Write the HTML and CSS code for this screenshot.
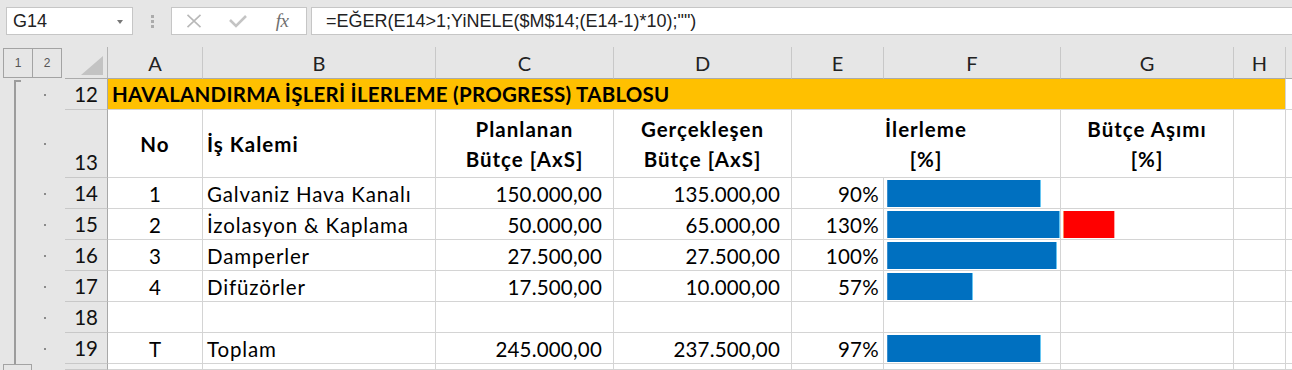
FILE: index.html
```html
<!DOCTYPE html>
<html lang="tr">
<head>
<meta charset="utf-8">
<title>Havalandırma İlerleme Tablosu</title>
<link rel="stylesheet" href="styles.css">
</head>
<body>
<div class="app">
  <div class="fbar">
    <div class="namebox"><span class="nb-text">G14</span><span class="nb-arrow"></span></div>
    <div class="grip"><i></i><i></i><i></i></div>
    <div class="fbtns">
      <span class="slot"><svg class="ic" width="16" height="14" viewBox="0 0 16 14"><path d="M1.5 0.8 L14.5 13.2 M14.5 0.8 L1.5 13.2" stroke="#b8b8b8" stroke-width="1.6" fill="none"/></svg></span>
      <span class="slot"><svg class="ic" width="18" height="13" viewBox="0 0 18 13"><path d="M1 5 L7 11 L17 1" stroke="#c4c4c4" stroke-width="2.6" fill="none"/></svg></span>
      <span class="slot"><span class="fx">fx</span></span>
    </div>
    <div class="formula">=EĞER(E14&gt;1;YiNELE($M$14;(E14-1)*10);"")</div>
  </div>

  <div class="sheet">
    <div class="outline"><span class="tick"></span><span class="minus"></span></div>

    <!-- column header row -->
    <div class="gut gut-h"><span class="lvl">1</span><span class="lvl lvl2">2</span></div>
    <div class="corner"><svg width="22" height="19" viewBox="0 0 22 19"><polygon points="0,19 22,19 22,0" fill="#c3c3c3"/></svg></div>
    <div class="ch">A</div>
    <div class="ch">B</div>
    <div class="ch">C</div>
    <div class="ch">D</div>
    <div class="ch">E</div>
    <div class="ch">F</div>
    <div class="ch">G</div>
    <div class="ch">H</div>
    <div class="ch ch-rest"></div>

    <!-- row 12 -->
    <div class="gut"><i></i></div>
    <div class="rh">12</div>
    <div class="title">HAVALANDIRMA İŞLERİ İLERLEME (PROGRESS) TABLOSU</div>
    <div class="c rest"></div>

    <!-- row 13 -->
    <div class="gut"><i></i></div>
    <div class="rh rh-b">13</div>
    <div class="c hd ctr">No</div>
    <div class="c hd left">İş Kalemi</div>
    <div class="c hd ctr two">Planlanan<br>Bütçe [AxS]</div>
    <div class="c hd ctr two">Gerçekleşen<br>Bütçe [AxS]</div>
    <div class="c hd ctr two span2">İlerleme<br>[%]</div>
    <div class="c hd ctr two">Bütçe Aşımı<br>[%]</div>
    <div class="c"></div>
    <div class="c rest"></div>

    <!-- row 14 -->
    <div class="gut"><i></i></div>
    <div class="rh">14</div>
    <div class="c ctr">1</div>
    <div class="c left">Galvaniz Hava Kanalı</div>
    <div class="c num">150.000,00</div>
    <div class="c num">135.000,00</div>
    <div class="c pct">90%</div>
    <div class="c barcell"><span class="bar" style="width:154px"></span></div>
    <div class="c barcell"></div>
    <div class="c"></div>
    <div class="c rest"></div>

    <!-- row 15 -->
    <div class="gut"><i></i></div>
    <div class="rh">15</div>
    <div class="c ctr">2</div>
    <div class="c left">İzolasyon &amp; Kaplama</div>
    <div class="c num">50.000,00</div>
    <div class="c num">65.000,00</div>
    <div class="c pct">130%</div>
    <div class="c barcell"><span class="bar" style="width:173px"></span></div>
    <div class="c barcell over"><span class="bar red" style="width:52px"></span></div>
    <div class="c"></div>
    <div class="c rest"></div>

    <!-- row 16 -->
    <div class="gut"><i></i></div>
    <div class="rh">16</div>
    <div class="c ctr">3</div>
    <div class="c left">Damperler</div>
    <div class="c num">27.500,00</div>
    <div class="c num">27.500,00</div>
    <div class="c pct">100%</div>
    <div class="c barcell"><span class="bar" style="width:170px"></span></div>
    <div class="c barcell"></div>
    <div class="c"></div>
    <div class="c rest"></div>

    <!-- row 17 -->
    <div class="gut"><i></i></div>
    <div class="rh">17</div>
    <div class="c ctr">4</div>
    <div class="c left">Difüzörler</div>
    <div class="c num">17.500,00</div>
    <div class="c num">10.000,00</div>
    <div class="c pct">57%</div>
    <div class="c barcell"><span class="bar" style="width:86px"></span></div>
    <div class="c barcell"></div>
    <div class="c"></div>
    <div class="c rest"></div>

    <!-- row 18 -->
    <div class="gut"><i></i></div>
    <div class="rh">18</div>
    <div class="c"></div>
    <div class="c"></div>
    <div class="c"></div>
    <div class="c"></div>
    <div class="c"></div>
    <div class="c"></div>
    <div class="c"></div>
    <div class="c"></div>
    <div class="c rest"></div>

    <!-- row 19 -->
    <div class="gut"><i></i></div>
    <div class="rh">19</div>
    <div class="c ctr">T</div>
    <div class="c left">Toplam</div>
    <div class="c num">245.000,00</div>
    <div class="c num">237.500,00</div>
    <div class="c pct">97%</div>
    <div class="c barcell"><span class="bar" style="width:154px"></span></div>
    <div class="c barcell"></div>
    <div class="c"></div>
    <div class="c rest"></div>

    <!-- row 20 (partial) -->
    <div class="gut"></div>
    <div class="rh"></div>
    <div class="c"></div>
    <div class="c"></div>
    <div class="c"></div>
    <div class="c"></div>
    <div class="c"></div>
    <div class="c"></div>
    <div class="c"></div>
    <div class="c"></div>
    <div class="c rest"></div>
  </div>
</div>
</body>
</html>
```

FILE: styles.css
```css
* { box-sizing: border-box; margin: 0; padding: 0; }

html, body {
  width: 1292px;
  height: 370px;
  overflow: hidden;
  background: #e6e6e6;
}

body {
  font-family: Lato, "Open Sans", sans-serif;
  color: #000;
}

.app {
  display: flex;
  flex-direction: column;
  height: 370px;
}

/* ---------- formula bar ---------- */
.fbar {
  height: 47px;
  flex: none;
  display: flex;
  align-items: flex-start;
  padding: 7px 0 0 6px;
  background: #e6e6e6;
}

.namebox {
  width: 127px;
  height: 28px;
  background: #fff;
  border: 1px solid #c6c6c6;
  display: flex;
  align-items: center;
  justify-content: space-between;
  padding: 0 9px 0 6px;
  font-family: "Liberation Sans", Arial, sans-serif;
  font-size: 18px;
  color: #222;
}

.nb-arrow {
  width: 0;
  height: 0;
  border-left: 3.5px solid transparent;
  border-right: 3.5px solid transparent;
  border-top: 4px solid #777;
  margin-top: 1px;
}

.grip {
  width: 38px;
  height: 28px;
  display: flex;
  flex-direction: column;
  align-items: center;
  justify-content: center;
  gap: 2px;
}

.grip i {
  display: block;
  width: 3px;
  height: 3px;
  background: #ababab;
}

.fbtns {
  width: 136px;
  height: 28px;
  background: #fff;
  border: 1px solid #c6c6c6;
  display: flex;
  align-items: center;
}

.slot {
  width: 44px;
  height: 26px;
  display: flex;
  align-items: center;
  justify-content: center;
}

.ic { display: block; }

.fx {
  font-family: "Liberation Serif", "Times New Roman", serif;
  font-style: italic;
  font-size: 19px;
  color: #6f6f6f;
  letter-spacing: -0.5px;
}

.formula {
  flex: 1;
  height: 28px;
  margin-left: 4px;
  background: #fff;
  border: 1px solid #c6c6c6;
  border-right: none;
  display: flex;
  align-items: center;
  padding-left: 14px;
  font-family: "Liberation Sans", Arial, sans-serif;
  font-size: 18px;
  color: #222;
  white-space: nowrap;
}

/* ---------- sheet grid ---------- */
.sheet {
  flex: 1;
  position: relative;
  display: grid;
  grid-template-columns: 65px 43px 95px 233px 178px 178px 92px 177px 173px 52px 1fr;
  grid-template-rows: 32px 31px 68px repeat(6, 31px) 1fr;
  background: #fff;
}

.gut {
  background: #e6e6e6;
  display: flex;
  align-items: center;
  padding-left: 44px;
}

.gut i {
  display: block;
  width: 2px;
  height: 2px;
  background: #8a8a8a;
}

.gut-h {
  padding: 1px 0 0 3px;
  align-items: flex-start;
}

.lvl {
  width: 30px;
  height: 30px;
  border: 1px solid #a3a3a3;
  display: flex;
  align-items: center;
  justify-content: center;
  font-family: "Liberation Sans", Arial, sans-serif;
  font-size: 12px;
  color: #555;
}

.lvl2 {
  width: 29px;
  border-left: none;
}

.corner {
  background: #e6e6e6;
  border-right: 1px solid #b4b4b4;
  border-bottom: 1px solid #ababab;
  display: flex;
  align-items: flex-end;
  justify-content: flex-end;
  padding: 0 4px 3px 0;
}

.corner svg { display: block; }

.ch {
  background: #e6e6e6;
  border-right: 1px solid #c8c8c8;
  border-bottom: 1px solid #ababab;
  display: flex;
  align-items: center;
  justify-content: center;
  font-size: 20px;
  color: #222;
  padding-top: 1px;
}

.ch-rest { border-right: none; }

.rh {
  background: #e6e6e6;
  border-right: 1px solid #a8a8a8;
  border-bottom: 1px solid #c8c8c8;
  display: flex;
  align-items: center;
  justify-content: flex-end;
  padding-right: 9px;
  font-size: 20.5px;
  color: #111;
}

.rh-b {
  align-items: flex-end;
  padding-bottom: 3px;
}

.title {
  grid-column: 3 / 11;
  background: #ffc000;
  border-right: 1px solid #d4d4d4;
  border-bottom: 1px solid #d4d4d4;
  display: flex;
  align-items: center;
  padding-left: 4px;
  font-weight: 700;
  font-size: 20.5px;
  letter-spacing: 0.25px;
  white-space: nowrap;
}

.c {
  background: #fff;
  border-right: 1px solid #d4d4d4;
  border-bottom: 1px solid #d4d4d4;
  display: flex;
  align-items: center;
  font-size: 20.5px;
  white-space: nowrap;
  overflow: hidden;
  padding-top: 2px;
}

.rest { border-right: none; }

.ctr { justify-content: center; text-align: center; }
.left { padding-left: 4px; letter-spacing: 0.85px; }
.num { justify-content: flex-end; padding-right: 11px; letter-spacing: 0.2px; }
.pct { justify-content: flex-end; padding-right: 4px; letter-spacing: 0.3px; }

.hd { font-weight: 700; padding-top: 0; letter-spacing: 1px; }
.two { line-height: 30px; }
.span2 { grid-column: span 2; }

.barcell {
  align-items: flex-start;
  padding: 2px 0 0 3px;
}

.over { padding-left: 2px; }

.bar {
  display: block;
  height: 27px;
  flex: none;
  background: #0070c0;
  border-left: 1px solid #3b8fd0;
  border-right: 1px solid #67c6f2;
}

.bar.red {
  background: #ff0000;
  border-left: 1px solid #ff8a5a;
  border-right: 1px solid #ffa6a6;
}

/* ---------- outline bracket ---------- */
.outline {
  position: absolute;
  left: 14px;
  top: 33px;
  width: 2px;
  bottom: 0;
  background: #9c9c9c;
}

.tick {
  position: absolute;
  left: 0;
  top: 0;
  width: 7px;
  height: 2px;
  background: #9c9c9c;
}

.minus {
  position: absolute;
  left: -11px;
  top: 284px;
  width: 29px;
  height: 12px;
  border: 1px solid #a3a3a3;
  background: #e6e6e6;
}
```
